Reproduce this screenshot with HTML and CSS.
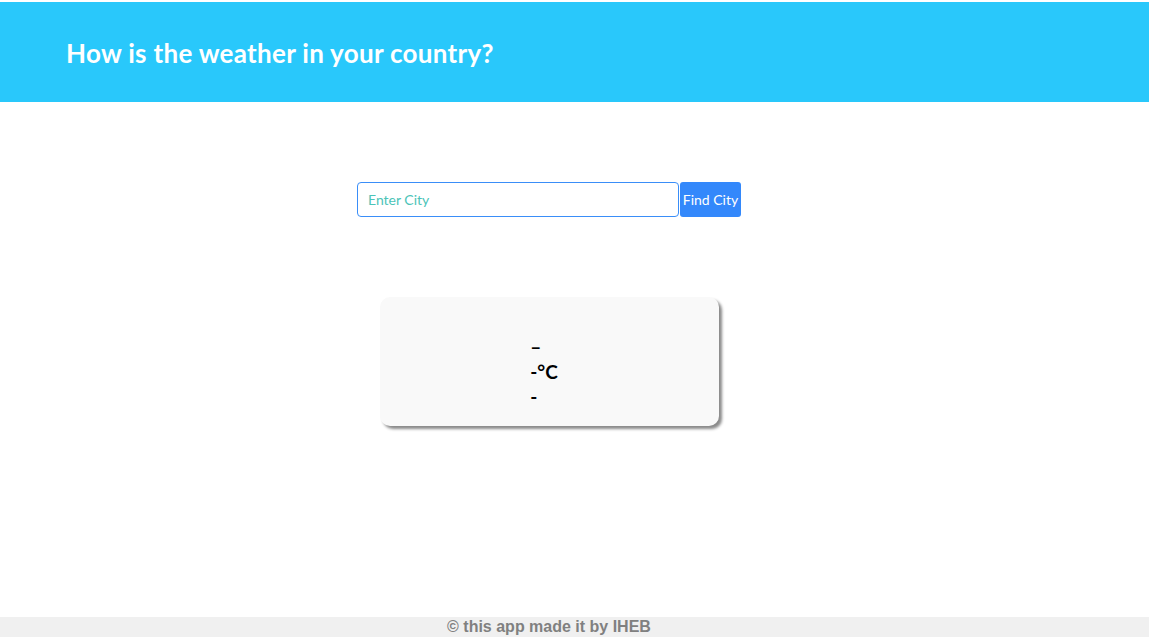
FILE: index.html
```html
<!DOCTYPE html>
<html lang="en">
<head>
<meta charset="utf-8">
<title>Weather</title>
<link rel="stylesheet" href="styles.css">
</head>
<body>
<header class="topbar">
  <h1 class="title">How is the weather in your country?</h1>
</header>
<main class="content">
  <form class="search" onsubmit="return false">
    <input class="search-input" type="text" placeholder="Enter City">
    <button class="search-btn" type="submit">Find City</button>
  </form>
  <section class="card">
    <div class="card-body">
      <div class="line line-city">–</div>
      <div class="line line-temp">-°C</div>
      <div class="line line-desc">-</div>
    </div>
  </section>
</main>
<footer class="footer">© this app made it by IHEB</footer>
</body>
</html>
```
FILE: styles.css
```css
html, body {
  margin: 0;
  padding: 0;
  height: 100%;
}
body {
  font-family: "Comic Sans MS", "Lato", "DejaVu Sans", sans-serif;
  background: #ffffff;
  display: flex;
  flex-direction: column;
  padding-top: 2px;
  box-sizing: border-box;
}
.topbar {
  background: #29c8fb;
  height: 100px;
  display: flex;
  align-items: center;
  padding-left: 66px;
}
.title {
  margin: 0;
  margin-top: 2px;
  color: #ffffff;
  font-size: 26px;
  font-weight: 700;
  letter-spacing: 0.3px;
}
.content {
  flex: 1;
  display: flex;
  flex-direction: column;
  align-items: center;
  padding-right: 51px;
  padding-top: 80px;
}
.search {
  display: flex;
  gap: 1px;
}
.search-input {
  width: 322px;
  height: 35px;
  box-sizing: border-box;
  border: 1px solid #3a8ef8;
  border-radius: 4px;
  padding: 0 10px;
  font-family: inherit;
  font-size: 14px;
  outline: none;
}
.search-input::placeholder {
  color: #4cc4b8;
}
.search-btn {
  width: 61px;
  height: 35px;
  box-sizing: border-box;
  border: none;
  border-radius: 3px;
  background: #3388fb;
  color: #ffffff;
  font-family: inherit;
  font-size: 14px;
  padding: 0;
}
.card {
  margin-top: 80px;
  width: 339px;
  height: 129px;
  box-sizing: border-box;
  background: #f9f9f9;
  border-radius: 10px;
  box-shadow: 3px 3px 3px #8a8a8a;
  display: flex;
  justify-content: center;
  padding-top: 37px;
  padding-right: 10px;
}
.card-body {
  display: flex;
  flex-direction: column;
  align-items: flex-start;
}
.line {
  font-weight: 700;
  font-size: 19px;
  color: #000000;
  line-height: 25px;
}
.footer {
  background: #f0f0f0;
  height: 20px;
  line-height: 20px;
  text-align: center;
  padding-right: 51px;
  font-family: "Liberation Sans", Arial, sans-serif;
  font-weight: 700;
  font-size: 16px;
  color: #808080;
}
```
